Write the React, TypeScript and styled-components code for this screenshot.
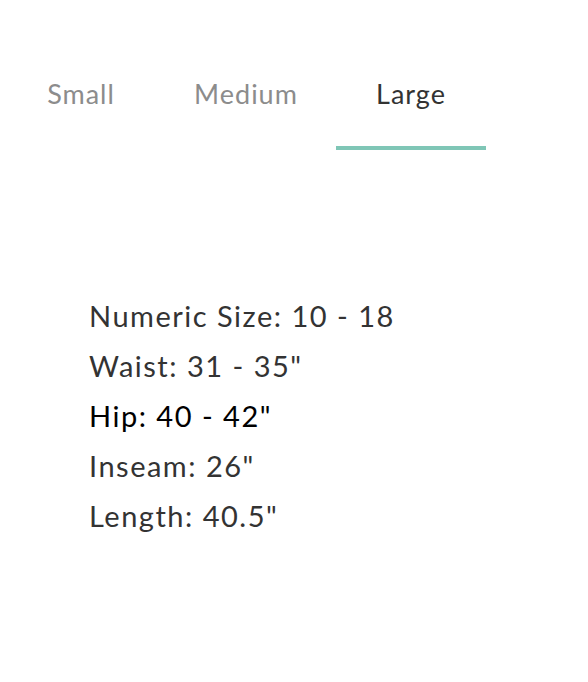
import React, { useState } from "react";
import styled, { createGlobalStyle } from "styled-components";

const Global = createGlobalStyle`
  html, body { margin: 0; padding: 0; background: #fff; }
  body { font-family: Lato, "Open Sans", sans-serif; }
`;

const Page = styled.div`
  width: 588px;
  height: 682px;
  box-sizing: border-box;
  padding-top: 77px;
`;

const TabBar = styled.div`
  display: flex;
  gap: 15px;
  padding-left: 6px;
`;

const Tab = styled.button<{ $active: boolean }>`
  width: 150px;
  height: 73px;
  box-sizing: border-box;
  padding: 0;
  border: none;
  border-bottom: 4px solid ${(p) => (p.$active ? "#7fc6b6" : "transparent")};
  background: none;
  font-family: Lato, "Open Sans", sans-serif;
  font-size: 27px;
  letter-spacing: 1px;
  color: ${(p) => (p.$active ? "#333333" : "#8c8c8c")};
  cursor: pointer;
  display: flex;
  align-items: flex-start;
  justify-content: center;
`;

const Specs = styled.ul`
  list-style: none;
  margin: 0;
  padding: 141px 0 0 89px;
  display: flex;
  flex-direction: column;
`;

const Spec = styled.li<{ $strong?: boolean }>`
  height: 50px;
  line-height: 50px;
  font-size: 29px;
  letter-spacing: 1.5px;
  color: ${(p) => (p.$strong ? "#000000" : "#333333")};
`;

const tabs = ["Small", "Medium", "Large"];
const specs = [
  "Numeric Size: 10 - 18",
  'Waist: 31 - 35"',
  'Hip: 40 - 42"',
  'Inseam: 26"',
  'Length: 40.5"',
];

export default function App() {
  const [active, setActive] = useState(2);
  return (
    <>
      <Global />
      <Page>
        <TabBar>
          {tabs.map((t, i) => (
            <Tab key={t} $active={i === active} onClick={() => setActive(i)}>
              {t}
            </Tab>
          ))}
        </TabBar>
        <Specs>
          {specs.map((s, i) => (
            <Spec key={s} $strong={i === 2}>
              {s}
            </Spec>
          ))}
        </Specs>
      </Page>
    </>
  );
}
